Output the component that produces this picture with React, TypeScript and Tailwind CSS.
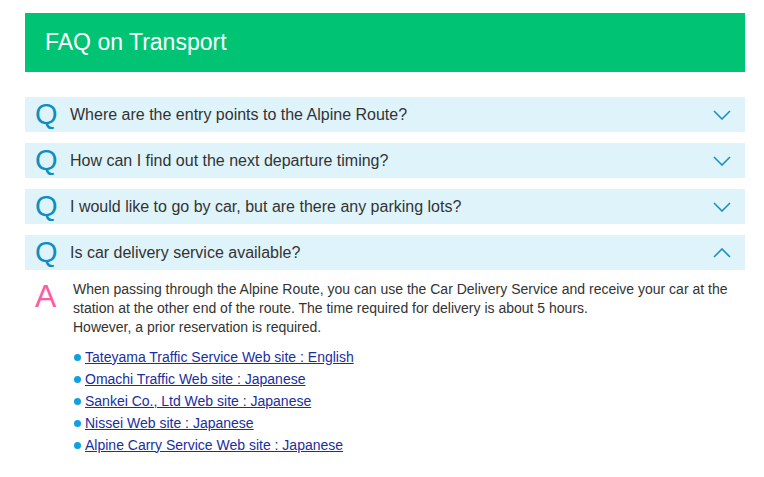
import React from "react";

const questions = [
  "Where are the entry points to the Alpine Route?",
  "How can I find out the next departure timing?",
  "I would like to go by car, but are there any parking lots?",
];

const links = [
  "Tateyama Traffic Service Web site : English",
  "Omachi Traffic Web site : Japanese",
  "Sankei Co., Ltd Web site : Japanese",
  "Nissei Web site : Japanese",
  "Alpine Carry Service Web site : Japanese",
];

function Chevron({ up }: { up?: boolean }) {
  return (
    <svg width="18" height="10" viewBox="0 0 18 10" className="shrink-0">
      <path
        d={up ? "M1 9 L9 1 L17 9" : "M1 1 L9 9 L17 1"}
        fill="none"
        stroke="#1a8fc2"
        strokeWidth="1.6"
      />
    </svg>
  );
}

function QRow({ text, open }: { text: string; open?: boolean }) {
  return (
    <div className="flex h-[35px] items-center bg-[#dff3fb] pl-[10px] pr-[14px]">
      <span className="w-[35px] text-[29px] leading-none text-[#0e8ec0]">Q</span>
      <span className="flex-1 text-[16px] text-[#333333]">{text}</span>
      <Chevron up={open} />
    </div>
  );
}

export default function App() {
  return (
    <div
      className="min-h-[477px] bg-white pl-[25px] pr-[19px] pt-[13px]"
      style={{ fontFamily: '"Liberation Sans", Arial, sans-serif' }}
    >
      <div className="flex h-[59px] items-center bg-[#00c473] pl-[20px]">
        <h1 className="text-[23px] text-white">FAQ on Transport</h1>
      </div>
      <div className="mt-[25px] flex flex-col gap-[11px]">
        {questions.map((q) => (
          <QRow key={q} text={q} />
        ))}
        <div>
          <QRow text="Is car delivery service available?" open />
          <div className="flex pl-[10px] pt-[10px]">
            <span className="w-[38px] text-[32px] leading-none text-[#ff5aa5]">A</span>
            <div className="flex-1 pr-[10px]">
              <p className="text-[14px] leading-[19px] text-[#333333]">
                When passing through the Alpine Route, you can use the Car Delivery Service and receive your car at the
                station at the other end of the route. The time required for delivery is about 5 hours.
                <br />
                However, a prior reservation is required.
              </p>
              <ul className="mt-[9px] flex flex-col pl-[1px]">
                {links.map((l) => (
                  <li key={l} className="flex h-[22px] items-center">
                    <span className="mr-[4px] inline-block h-[7px] w-[7px] rounded-full bg-[#0ea0e0]" />
                    <a href="#" className="text-[14px] text-[#1a2ea0] underline">
                      {l}
                    </a>
                  </li>
                ))}
              </ul>
            </div>
          </div>
        </div>
      </div>
    </div>
  );
}
